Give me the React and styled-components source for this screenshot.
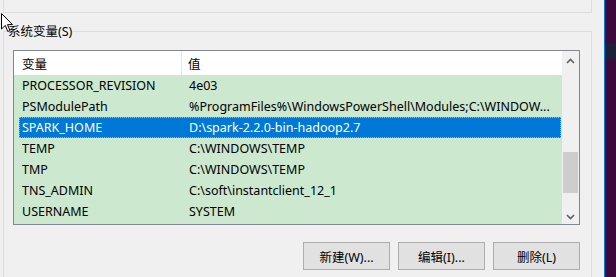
import React from "react";
import styled, { createGlobalStyle } from "styled-components";

const Global = createGlobalStyle`
  html, body { margin: 0; padding: 0; background: #f0f0f0; }
  body {
    font-family: "Noto Sans", "Noto Sans CJK SC", sans-serif;
    font-size: 12.5px;
    color: #000;
  }
  * { box-sizing: border-box; }
`;

const Page = styled.div`
  display: flex;
  width: 616px;
  height: 277px;
  overflow: hidden;
`;

const Main = styled.div`
  position: relative;
  width: 604px;
  flex: none;
  padding: 0 12px 0 3px;
  background: #f0f0f0;
`;

const Edge = styled.div`
  width: 1px;
  flex: none;
  background: #0078d7;
`;

const Desktop = styled.div`
  flex: 1;
  background: #3d0a3c;
  display: flex;
  flex-direction: column;
`;

const DesktopBand = styled.div`
  margin-top: 43px;
  height: 17px;
  background: #1b2238;
`;

const TopGroup = styled.div`
  height: 13px;
  border: 1px solid #dcdcdc;
  border-top: none;
`;

const Group = styled.fieldset`
  margin: 9px 0 0 0;
  padding: 9px 11px 0 9px;
  border: 1px solid #dcdcdc;
  border-bottom: none;
  min-inline-size: 0;
  height: 260px;
`;

const Legend = styled.legend`
  margin-left: -6px;
  padding: 0 1px;
  line-height: 19px;
  height: 19px;
  font-size: 12.5px;
`;

const ListBox = styled.div`
  height: 175px;
  border: 1px solid #828790;
  display: grid;
  grid-template-columns: 1fr 17px;
  background: #cce8cf;
`;

const ListArea = styled.div`
  overflow: hidden;
  display: flex;
  flex-direction: column;
`;

const Header = styled.div`
  height: 24px;
  flex: none;
  background: #fff;
  display: grid;
  grid-template-columns: 168px 1fr;
  align-items: center;
`;

const HeaderCell = styled.div`
  height: 100%;
  display: flex;
  align-items: center;
  padding-left: ${(p) => p.$pad}px;
  border-right: ${(p) => (p.$sep ? "1px solid #e5e5e5" : "none")};
`;

const Row = styled.div`
  height: 21px;
  flex: none;
  margin: 0 1px 0 5px;
  padding-left: 3px;
  display: grid;
  grid-template-columns: 167px 1fr;
  align-items: center;
  white-space: nowrap;
  background: ${(p) => (p.$selected ? "#0078d7" : "transparent")};
  color: ${(p) => (p.$selected ? "#fff" : "#000")};
  outline: ${(p) => (p.$selected ? "1px dotted #f0a050" : "none")};
  outline-offset: -1px;
`;

const Cell = styled.span`
  overflow: hidden;
  white-space: nowrap;
`;

const ScrollBar = styled.div`
  background: #f0f0f0;
  display: grid;
  grid-template-rows: 17px 1fr 17px;
`;

const ArrowBtn = styled.div`
  display: flex;
  align-items: center;
  justify-content: center;
  padding-top: ${(p) => p.$offset || 0}px;
`;

const Track = styled.div`
  display: flex;
  flex-direction: column;
  align-items: center;
`;

const Thumb = styled.div`
  width: 15px;
  height: ${(p) => p.$size}px;
  margin-top: ${(p) => p.$offset}px;
  background: #cdcdcd;
`;

const Buttons = styled.div`
  margin-top: 17px;
  display: flex;
  justify-content: flex-end;
  gap: 8px;
`;

const Button = styled.button`
  width: 87px;
  height: 28px;
  background: #e1e1e1;
  border: 1px solid #adadad;
  border-radius: 0;
  font-family: inherit;
  font-size: 12.5px;
  color: #000;
  padding: 0;
`;

const Cursor = styled.svg`
  position: absolute;
  left: 1px;
  top: 13px;
`;

const Chevron = ({ up }) => (
  <svg width="9" height="6" viewBox="0 0 9 6">
    <path
      d={up ? "M1 5 L4.5 1.5 L8 5" : "M1 1 L4.5 4.5 L8 1"}
      fill="none"
      stroke="#606060"
      strokeWidth="1.6"
    />
  </svg>
);

const rows = [
  ["PROCESSOR_REVISION", "4e03"],
  ["PSModulePath", "%ProgramFiles%\\WindowsPowerShell\\Modules;C:\\WINDOW..."],
  ["SPARK_HOME", "D:\\spark-2.2.0-bin-hadoop2.7", true],
  ["TEMP", "C:\\WINDOWS\\TEMP"],
  ["TMP", "C:\\WINDOWS\\TEMP"],
  ["TNS_ADMIN", "C:\\soft\\instantclient_12_1"],
  ["USERNAME", "SYSTEM"],
];

export default function App() {
  return (
    <>
      <Global />
      <Page>
        <Main>
          <TopGroup />
          <Group>
            <Legend>系统变量(S)</Legend>
            <ListBox>
              <ListArea>
                <Header>
                  <HeaderCell $pad={8} $sep>变量</HeaderCell>
                  <HeaderCell $pad={6}>值</HeaderCell>
                </Header>
                {rows.map(([k, v, sel]) => (
                  <Row key={k} $selected={sel}>
                    <Cell>{k}</Cell>
                    <Cell>{v}</Cell>
                  </Row>
                ))}
              </ListArea>
              <ScrollBar>
                <ArrowBtn $offset={3}>
                  <Chevron up />
                </ArrowBtn>
                <Track>
                  <Thumb $offset={84} $size={41} />
                </Track>
                <ArrowBtn $offset={2}>
                  <Chevron />
                </ArrowBtn>
              </ScrollBar>
            </ListBox>
            <Buttons>
              <Button>新建(W)...</Button>
              <Button>编辑(I)...</Button>
              <Button>删除(L)</Button>
            </Buttons>
          </Group>
          <Cursor width="13" height="20" viewBox="0 0 13 20">
            <path
              d="M0.5 0.5 L0.5 16 L4.3 12.4 L6.8 18.5 L9 17.6 L6.5 11.6 L11.5 11.6 Z"
              fill="#fff"
              stroke="#000"
              strokeWidth="1"
            />
          </Cursor>
        </Main>
        <Edge />
        <Desktop>
          <DesktopBand />
        </Desktop>
      </Page>
    </>
  );
}
